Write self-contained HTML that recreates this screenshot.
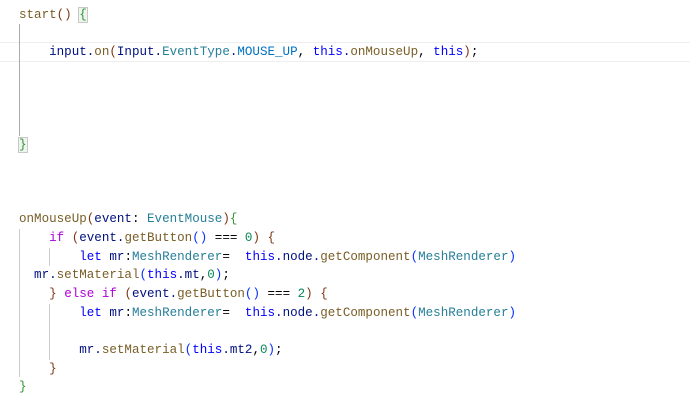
<!DOCTYPE html>
<html><head><style>
body{margin:0;width:690px;height:418px;background:#fff;position:relative;overflow:hidden;font-family:"Liberation Mono",monospace;font-size:12.55px;}
.l{position:absolute;left:19px;white-space:pre;line-height:18px;height:18px;color:#001080}
.hl{position:absolute;left:0;width:690px;top:42px;height:18px;border-top:1px solid #eee;border-bottom:1px solid #eee}
.g{position:absolute;width:1px;background:#ccc}
.f{color:#795e26}.k{color:#0000ff}.t{color:#267f99}.n{color:#098658}.p{color:#af00db}
.b1{color:#319331}.b2{color:#7b3814}.b3{color:#0431fa}.d{color:#000}
.box{outline:1px solid #c8c8c8;background:#eef5ee}
</style></head><body>
<div class="hl"></div>
<div class="g" style="left:19px;top:24px;height:112px;background:#aaa"></div>
<div class="g" style="left:19px;top:229px;height:148px"></div>
<div class="g" style="left:49px;top:248px;height:18px"></div>
<div class="g" style="left:49px;top:304px;height:56px"></div>
<div class="l" style="top:6px"><span class="f">start</span><span class="b2">()</span> <span class="b1 box">{</span></div>
<div class="l" style="top:43px">    input.<span class="f">on</span><span class="b2">(</span>Input.<span class="t">EventType</span>.<span class="k" style="color:#0070c1">MOUSE_UP</span><span class="d">,</span> <span class="k">this</span>.<span class="f">onMouseUp</span><span class="d">,</span> <span class="k">this</span><span class="b2">)</span><span class="d">;</span></div>
<div class="l" style="top:136px"><span class="b1 box">}</span></div>
<div class="l" style="top:210px"><span class="f">onMouseUp</span><span class="b2">(</span>event<span class="d">:</span> <span class="t">EventMouse</span><span class="b2">)</span><span class="b1">{</span></div>
<div class="l" style="top:229px">    <span class="p">if</span> <span class="b2">(</span>event.<span class="f">getButton</span><span class="b3">()</span> <span class="d">===</span> <span class="n">0</span><span class="b2">)</span> <span class="b2">{</span></div>
<div class="l" style="top:248px">        <span class="k">let</span> mr<span class="d">:</span><span class="t">MeshRenderer</span><span class="d">=</span>  <span class="k">this</span>.node.<span class="f">getComponent</span><span class="b3">(</span><span class="t">MeshRenderer</span><span class="b3">)</span></div>
<div class="l" style="top:266px">  mr.<span class="f">setMaterial</span><span class="b3">(</span><span class="k">this</span>.mt<span class="d">,</span><span class="n">0</span><span class="b3">)</span><span class="d">;</span></div>
<div class="l" style="top:285px">    <span class="b2">}</span> <span class="p">else</span> <span class="p">if</span> <span class="b2">(</span>event.<span class="f">getButton</span><span class="b3">()</span> <span class="d">===</span> <span class="n">2</span><span class="b2">)</span> <span class="b2">{</span></div>
<div class="l" style="top:304px">        <span class="k">let</span> mr<span class="d">:</span><span class="t">MeshRenderer</span><span class="d">=</span>  <span class="k">this</span>.node.<span class="f">getComponent</span><span class="b3">(</span><span class="t">MeshRenderer</span><span class="b3">)</span></div>
<div class="l" style="top:341px">        mr.<span class="f">setMaterial</span><span class="b3">(</span><span class="k">this</span>.mt2<span class="d">,</span><span class="n">0</span><span class="b3">)</span><span class="d">;</span></div>
<div class="l" style="top:360px">    <span class="b2">}</span></div>
<div class="l" style="top:378px"><span class="b1">}</span></div>
</body></html>
